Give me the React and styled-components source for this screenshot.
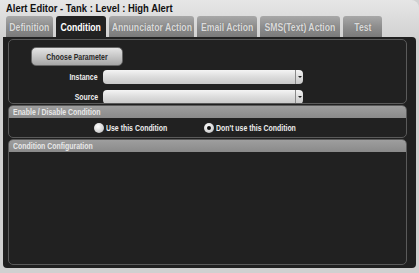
import React from 'react';
import styled, { createGlobalStyle } from 'styled-components';

const GlobalStyle = createGlobalStyle`
  html, body {
    margin: 0;
    padding: 0;
    background: #d2d2d2;
  }
  body {
    font-family: "Liberation Sans", Arial, sans-serif;
  }
`;

// the original uses a condensed face; squeeze Liberation Sans to match
const Narrow = styled.span`
  display: inline-block;
  white-space: nowrap;
  transform: scaleX(${p => p.s || 0.82});
  transform-origin: ${p => p.origin || 'center'};
`;

const Window = styled.div`
  width: 419px;
  height: 273px;
  box-sizing: border-box;
  background: linear-gradient(#e6e6e6, #d0d0d0 40px, #d0d0d0);
  border-top-right-radius: 8px;
  display: flex;
  flex-direction: column;
  padding: 0 3px 5px 3px;
`;

const Title = styled.div`
  height: 16px;
  line-height: 17px;
  padding-left: 3px;
  font-size: 11.5px;
  font-weight: bold;
  color: #111;
`;

const TabBar = styled.div`
  display: flex;
  gap: 3px;
  padding-left: 3px;
  height: 21px;
  align-items: flex-end;
`;

const Tab = styled.div`
  height: 21px;
  width: ${p => p.w}px;
  box-sizing: border-box;
  border-radius: 3px 3px 0 0;
  display: flex;
  align-items: center;
  justify-content: center;
  font-size: 11px;
  font-weight: bold;
  color: ${p => (p.active ? '#fff' : '#dadada')};
  background: ${p =>
    p.active
      ? '#222'
      : 'linear-gradient(#a8a8a8, #8e8e8e 50%, #7a7a7a)'};
  text-shadow: ${p => (p.active ? 'none' : '0 0 1px #6a6a6a')};
`;

const Panel = styled.div`
  flex: 1;
  background: #202020;
  border-radius: 0 4px 4px 4px;
  padding: 2px 9px 3px 5px;
  display: flex;
  flex-direction: column;
  gap: 1px;
`;

const Box = styled.div`
  border: 1px solid #5a5a5a;
  border-radius: 5px;
  background: #212121;
  overflow: hidden;
  display: flex;
  flex-direction: column;
  flex: ${p => (p.grow ? 1 : 'none')};
`;

const ParamBox = styled(Box)`
  height: 65px;
  box-sizing: border-box;
  padding: 7px 0 0 22px;
  gap: 4px;
`;

const Button = styled.div`
  width: 92px;
  height: 20px;
  box-sizing: border-box;
  border: 1px solid #666;
  border-radius: 5px;
  background: linear-gradient(#e4e4e4, #c6c6c6 50%, #a6a6a6);
  color: #2a2a2a;
  font-size: 9.5px;
  font-weight: bold;
  display: flex;
  align-items: center;
  justify-content: center;
`;

const Row = styled.div`
  display: flex;
  align-items: center;
  gap: 5px;
  height: 13px;
  margin-top: ${p => p.mt || 0}px;
`;

const Label = styled.div`
  width: 67px;
  text-align: right;
  color: #eee;
  font-size: 9.5px;
  font-weight: bold;
`;

const Select = styled.div`
  width: 200px;
  height: 14px;
  box-sizing: border-box;
  border-radius: 4px;
  background: linear-gradient(#f4f4f4, #dcdcdc 50%, #c8c8c8);
  display: flex;
  justify-content: flex-end;
  overflow: hidden;
`;

const Arrow = styled.div`
  width: 7px;
  border-left: 1px solid #8a8a8a;
  display: flex;
  align-items: center;
  justify-content: center;
  &::after {
    content: '';
    border-left: 2px solid transparent;
    border-right: 2px solid transparent;
    border-top: 2px solid #222;
  }
`;

const Header = styled.div`
  height: 12px;
  line-height: 12px;
  padding-left: 4px;
  background: linear-gradient(#9e9e9e, #8a8a8a);
  color: #e8e8e8;
  font-size: 9.5px;
  font-weight: bold;
`;

const RadioRow = styled.div`
  height: 19px;
  display: flex;
  align-items: center;
  padding-left: 85px;
`;

const RadioItem = styled.div`
  width: ${p => p.w}px;
  display: flex;
  align-items: center;
  gap: 2px;
  color: #eee;
  font-size: 9.5px;
  font-weight: bold;
`;

const RadioDot = styled.div`
  flex: none;
  width: 10px;
  height: 10px;
  box-sizing: border-box;
  border-radius: 50%;
  background: radial-gradient(circle at 40% 35%, #fff, #d6d6d6 60%, #9a9a9a);
  display: flex;
  align-items: center;
  justify-content: center;
  &::after {
    content: '';
    display: ${p => (p.checked ? 'block' : 'none')};
    width: 4px;
    height: 4px;
    border-radius: 50%;
    background: #111;
  }
`;

const tabs = [
  ['Definition', 47],
  ['Condition', 50, true],
  ['Annunciator Action', 85],
  ['Email Action', 60],
  ['SMS(Text) Action', 80],
  ['Test', 39],
];

const S = 0.73;

export default function App() {
  return (
    <>
      <GlobalStyle />
      <Window>
        <Title><Narrow origin="left">Alert Editor - Tank : Level : High Alert</Narrow></Title>
        <TabBar>
          {tabs.map(([t, w, a]) => (
            <Tab key={t} w={w} active={a}><Narrow s={0.79}>{t}</Narrow></Tab>
          ))}
        </TabBar>
        <Panel>
          <ParamBox>
            <Button><Narrow s={S}>Choose Parameter</Narrow></Button>
            <Row>
              <Label><Narrow s={S} origin="right">Instance</Narrow></Label>
              <Select><Arrow /></Select>
            </Row>
            <Row mt={3}>
              <Label><Narrow s={S} origin="right">Source</Narrow></Label>
              <Select><Arrow /></Select>
            </Row>
          </ParamBox>
          <Box>
            <Header><Narrow s={S} origin="left">Enable / Disable Condition</Narrow></Header>
            <RadioRow>
              <RadioItem w={110}><RadioDot /><Narrow s={S} origin="left">Use this Condition</Narrow></RadioItem>
              <RadioItem w={110}><RadioDot checked /><Narrow s={S} origin="left">Don't use this Condition</Narrow></RadioItem>
            </RadioRow>
          </Box>
          <Box grow>
            <Header><Narrow s={S} origin="left">Condition Configuration</Narrow></Header>
          </Box>
        </Panel>
      </Window>
    </>
  );
}
